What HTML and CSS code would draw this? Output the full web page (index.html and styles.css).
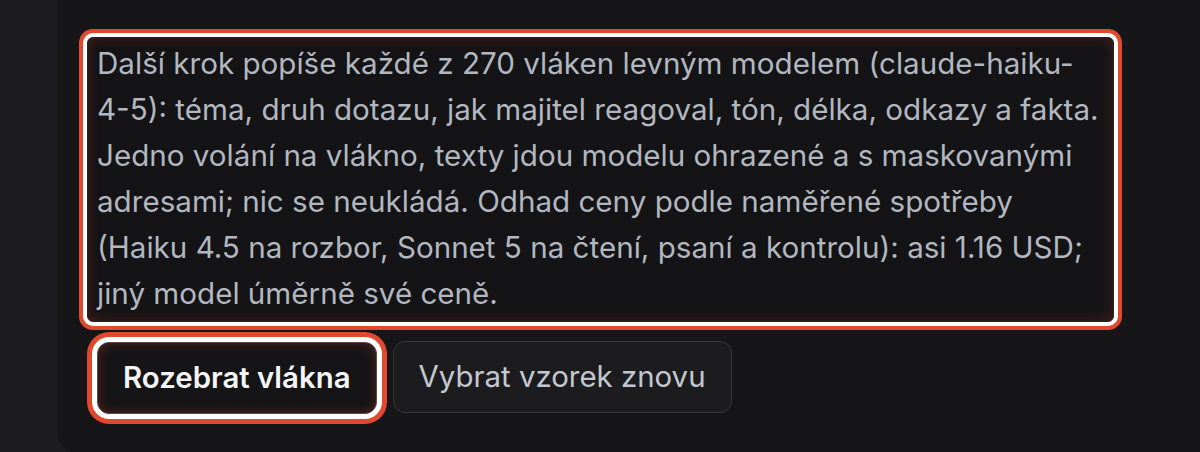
FILE: index.html
```html
<!DOCTYPE html>
<html lang="cs">
<head>
<meta charset="utf-8">
<title>Rozbor vláken</title>
<link rel="stylesheet" href="styles.css">
</head>
<body>
<div class="panel">
  <div class="note">Další krok popíše každé z 270 vláken levným modelem (claude-haiku-<br>4-5): téma, druh dotazu, jak majitel reagoval, tón, délka, odkazy a fakta.<br>Jedno volání na vlákno, texty jdou modelu ohrazené a s maskovanými<br>adresami; nic se neukládá. Odhad ceny podle naměřené spotřeby<br>(Haiku 4.5 na rozbor, Sonnet 5 na čtení, psaní a kontrolu): asi 1.16 USD;<br>jiný model úměrně své ceně.</div>
  <div class="actions">
    <button class="btn btn-primary" type="button">Rozebrat vlákna</button>
    <button class="btn btn-secondary" type="button">Vybrat vzorek znovu</button>
  </div>
</div>
</body>
</html>
```

FILE: styles.css
```css
html, body {
  margin: 0;
  padding: 0;
  background: #1c1c1f;
  overflow: hidden;
  height: 452px;
  font-family: Inter, "Noto Sans", sans-serif;
}

.panel {
  margin-left: 58px;
  height: 456px;
  box-sizing: border-box;
  padding: 37px 0 0 29px;
  background: #161618;
  border-bottom-left-radius: 24px;
}

.note {
  box-sizing: border-box;
  width: 1027px;
  height: 285px;
  padding: 2px 0 0 9px;
  border: 1px solid #2a2224;
  border-radius: 6px;
  background: #141315;
  color: #b2b7c0;
  font-size: 29.6px;
  line-height: 46px;
  white-space: nowrap;
  overflow: hidden;
  box-shadow:
    inset 0 0 14px rgba(200, 60, 40, 0.28),
    0 0 0 4px #ffffff,
    0 0 0 8px #e0492d;
}

.actions {
  display: flex;
  gap: 16px;
  margin-top: 20px;
  padding-left: 10px;
}

.btn {
  box-sizing: border-box;
  height: 72px;
  padding: 0 25px;
  border-radius: 12px;
  font-family: Inter, "Noto Sans", sans-serif;
  font-size: 29.4px;
  line-height: 36px;
}

.btn-primary {
  background: #151416;
  color: #f4f4f5;
  font-weight: 600;
  border: 1px solid #5a4a4a;
  box-shadow:
    inset 0 0 12px rgba(200, 60, 40, 0.35),
    0 0 0 5px #ffffff,
    0 0 0 10px #e0492d;
}

.btn-secondary {
  margin-top: -1px;
  background: #1c1c1f;
  color: #c3c8d0;
  font-weight: 400;
  border: 1px solid #38383c;
}
```
